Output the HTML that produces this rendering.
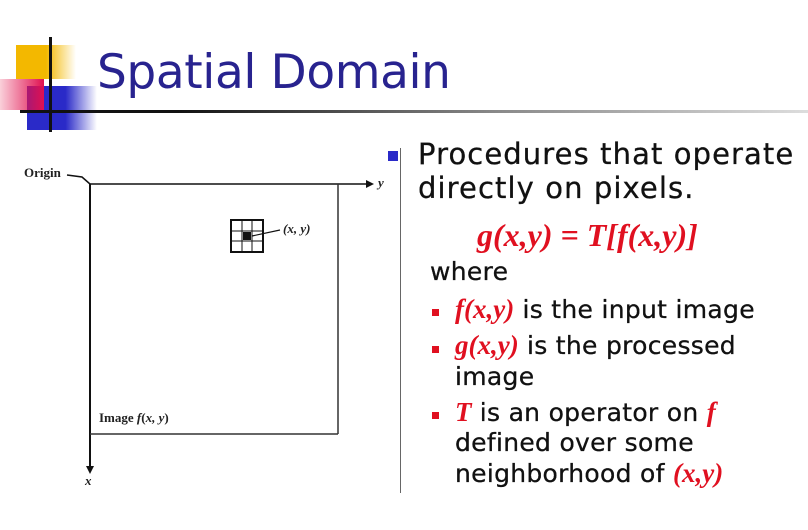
<!DOCTYPE html>
<html><head><meta charset="utf-8"><style>
body{margin:0;width:808px;height:530px;background:#fff;position:relative;overflow:hidden;font-family:"DejaVu Sans","Liberation Sans",sans-serif}
.a{position:absolute;white-space:nowrap;line-height:1}
.t{font-size:29px;color:#111;-webkit-text-stroke:0.3px #111;letter-spacing:1.1px}
.s{font-size:25px;color:#111;-webkit-text-stroke:0.3px #111;letter-spacing:0.3px}
.r{font-family:"Liberation Serif",serif;font-style:italic;font-weight:bold;color:#e01020;-webkit-text-stroke:0;letter-spacing:0}
.sq{position:absolute;width:7px;height:7px;background:#e01020}
.d{font-family:"Liberation Serif",serif;font-weight:bold;font-size:13px;color:#222}
</style></head><body>
<div class="a" style="left:16px;top:45px;width:60px;height:34px;background:linear-gradient(90deg,#f3b800 50%,rgba(243,184,0,0))"></div>
<div class="a" style="left:27px;top:86px;width:70px;height:44px;background:linear-gradient(90deg,#2a2ac8 55%,rgba(42,42,200,0))"></div>
<div class="a" style="left:0;top:79px;width:44px;height:31px;background:linear-gradient(90deg,rgba(230,20,70,0.2),#e01050)"></div>
<div class="a" style="left:49px;top:37px;width:3px;height:95px;background:#111"></div>
<div class="a" style="left:20px;top:110px;width:788px;height:3px;background:linear-gradient(90deg,#111 20%,#888 60%,#ddd)"></div>
<div class="a" style="left:97px;top:49px;font-size:47px;color:#28238f;letter-spacing:-0.4px">Spatial Domain</div>

<div class="a" style="left:400px;top:148px;width:1px;height:345px;background:#666"></div>
<div class="a" style="left:388px;top:151px;width:10px;height:10px;background:#2a2ac8"></div>
<div class="a t" style="left:418px;top:140px">Procedures that operate</div>
<div class="a t" style="left:418px;top:174px">directly on pixels.</div>
<div class="a r" style="left:477px;top:219px;font-size:32px">g(x,y) = T[f(x,y)]</div>
<div class="a s" style="left:430px;top:259px">where</div>
<div class="sq" style="left:432px;top:309px"></div>
<div class="a s" style="left:455px;top:296px"><span class="r" style="font-size:27px">f(x,y)</span> is the input image</div>
<div class="sq" style="left:432px;top:346px"></div>
<div class="a s" style="left:455px;top:332px"><span class="r" style="font-size:27px">g(x,y)</span> is the processed</div>
<div class="a s" style="left:455px;top:364px">image</div>
<div class="sq" style="left:432px;top:412px"></div>
<div class="a s" style="left:455px;top:399px"><span class="r" style="font-size:27px">T</span> is an operator on <span class="r" style="font-size:27px">f</span></div>
<div class="a s" style="left:455px;top:430px">defined over some</div>
<div class="a s" style="left:455px;top:460px">neighborhood of <span class="r" style="font-size:27px">(x,y)</span></div>

<svg class="a" style="left:0;top:0" width="400" height="530">
<path d="M67 175 L82 177 L90 184" fill="none" stroke="#111" stroke-width="1.5"/>
<line x1="90" y1="184" x2="368" y2="184" stroke="#111" stroke-width="1.5"/>
<polygon points="366,180 374,184 366,188" fill="#111"/>
<line x1="90" y1="184" x2="90" y2="468" stroke="#111" stroke-width="2"/>
<polygon points="86,466 90,474 94,466" fill="#111"/>
<line x1="338" y1="184" x2="338" y2="434" stroke="#333" stroke-width="1.5"/>
<line x1="90" y1="434" x2="338" y2="434" stroke="#333" stroke-width="1.5"/>
<rect x="231" y="220" width="32" height="32" fill="none" stroke="#111" stroke-width="2"/>
<path d="M242 220V252M252 220V252M231 231H263M231 241H263" stroke="#111" stroke-width="1"/>
<rect x="243" y="232" width="8" height="8" fill="#111"/>
<line x1="252" y1="236" x2="280" y2="230" stroke="#111" stroke-width="1.2"/>
</svg>
<div class="a d" style="left:24px;top:166px">Origin</div>
<div class="a d" style="left:378px;top:176px;font-style:italic">y</div>
<div class="a d" style="left:283px;top:222px;font-style:italic">(x, y)</div>
<div class="a d" style="left:99px;top:411px">Image <i>f</i>(<i>x, y</i>)</div>
<div class="a d" style="left:85px;top:474px;font-style:italic">x</div>
</body></html>
